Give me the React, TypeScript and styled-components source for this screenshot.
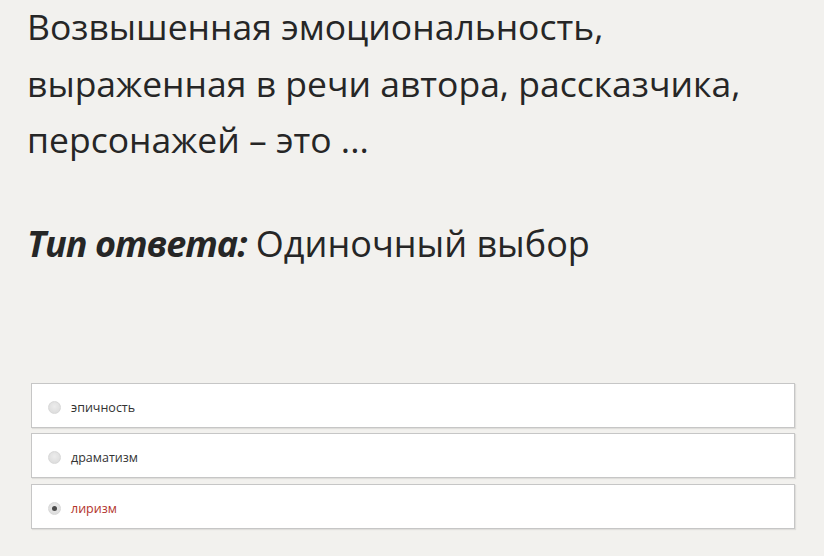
import { createGlobalStyle, styled } from 'styled-components'

const GlobalStyle = createGlobalStyle`
  html, body {
    margin: 0;
    padding: 0;
    background: #f2f1ee;
  }
  body {
    font-family: 'Open Sans', 'DejaVu Sans', sans-serif;
    color: #222;
  }
`

const Page = styled.div`
  width: 824px;
  height: 556px;
  overflow: hidden;
  padding: 0 29px 0 27px;
  box-sizing: border-box;
`

const Question = styled.h1`
  margin: -2px 0 0;
  font-size: 35.5px;
  line-height: 56.5px;
  font-weight: 400;
  color: #262626;
`

const AnswerType = styled.p`
  margin: 48px 0 0;
  font-size: 36px;
  line-height: 56px;
  color: #262626;

  b {
    font-weight: 700;
    font-style: italic;
    letter-spacing: -1px;
  }
`

const Options = styled.div`
  display: flex;
  flex-direction: column;
  gap: 5px;
  margin: 111px 0 0 4px;
`

const Option = styled.label`
  display: flex;
  align-items: center;
  gap: 10px;
  height: 45px;
  padding: 5px 0 0 16px;
  background: #fff;
  border: 1px solid #c6c6c6;
  box-shadow: 1px 1px 1px rgba(0, 0, 0, 0.08);
  box-sizing: border-box;

  &:last-child {
    margin-top: 1px;
  }
`

const Radio = styled.span<{ $checked?: boolean }>`
  width: 13px;
  height: 13px;
  border-radius: 50%;
  background: radial-gradient(circle at 50% 40%, #ececec, #d9d9d9);
  border: 1px solid #d8d8d8;
  box-sizing: border-box;
  display: flex;
  align-items: center;
  justify-content: center;

  &::after {
    content: '';
    width: 5px;
    height: 5px;
    border-radius: 50%;
    background: ${(p) => (p.$checked ? '#4a4a4a' : 'transparent')};
  }
`

const OptionText = styled.span<{ $checked?: boolean }>`
  font-size: 12.5px;
  color: ${(p) => (p.$checked ? '#b3342c' : '#333')};
`

const answers = [
  { text: 'эпичность', checked: false },
  { text: 'драматизм', checked: false },
  { text: 'лиризм', checked: true },
]

export default function App() {
  return (
    <Page>
      <GlobalStyle />
      <Question>
        Возвышенная эмоциональность,
        <br />
        выраженная в речи автора, рассказчика,
        <br />
        персонажей – это ...
      </Question>
      <AnswerType>
        <b>Тип ответа:</b> Одиночный выбор
      </AnswerType>
      <Options>
        {answers.map((a) => (
          <Option key={a.text}>
            <Radio $checked={a.checked} />
            <OptionText $checked={a.checked}>{a.text}</OptionText>
          </Option>
        ))}
      </Options>
    </Page>
  )
}
